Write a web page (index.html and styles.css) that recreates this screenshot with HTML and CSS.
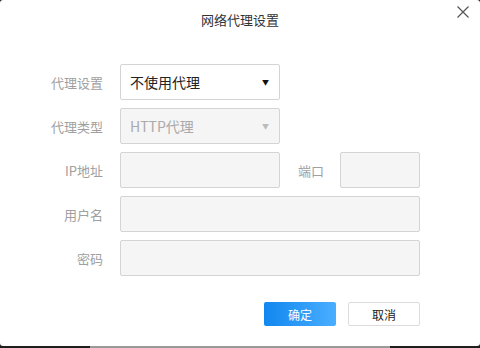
FILE: index.html
```html
<!DOCTYPE html>
<html lang="zh-CN">
  <head>
    <meta charset="UTF-8" />
    <title>网络代理设置</title>
    <link rel="stylesheet" href="styles.css">
  </head>
  <body>
    <div class="dialog">
      <div class="dialog-header">
        <h1>网络代理设置</h1>
        <button class="close-btn" aria-label="关闭">
          <svg width="12" height="12" viewBox="0 0 12 12">
            <path d="M0.5 0.5 L11.5 11.5 M11.5 0.5 L0.5 11.5" stroke="#555" stroke-width="1.2" fill="none" />
          </svg>
        </button>
      </div>

      <div class="form">
        <div class="form-row">
          <label class="form-label">代理设置</label>
          <div class="select">
            <span>不使用代理</span>
            <span class="arrow">▼</span>
          </div>
        </div>

        <div class="form-row">
          <label class="form-label">代理类型</label>
          <div class="select disabled">
            <span>HTTP代理</span>
            <span class="arrow">▼</span>
          </div>
        </div>

        <div class="form-row">
          <label class="form-label">IP地址</label>
          <input class="input input-ip" disabled />
          <label class="form-label port-label">端口</label>
          <input class="input input-port" disabled />
        </div>

        <div class="form-row">
          <label class="form-label">用户名</label>
          <input class="input input-wide" disabled />
        </div>

        <div class="form-row">
          <label class="form-label">密码</label>
          <input class="input input-wide" type="password" disabled />
        </div>
      </div>

      <div class="dialog-footer">
        <button class="btn btn-primary">确定</button>
        <button class="btn btn-default">取消</button>
      </div>
    </div>
    <div class="taskbar-strip"></div>
  </body>
</html>
```

FILE: styles.css
```css
/* Base */
body {
  margin: 0;
  background: #1e1e1e;
  font-family: "Noto Sans CJK SC", "Noto Sans", sans-serif;
  color: #333;
}

.dialog {
  height: 346px;
  background: #fff;
  border-radius: 3px;
  box-sizing: border-box;
  display: flex;
  flex-direction: column;
}

/* Header */
.dialog-header {
  position: relative;
  height: 64px;
}

.dialog-header h1 {
  margin: 0;
  padding-top: 10px;
  font-size: 13px;
  font-weight: normal;
  text-align: center;
  line-height: 20px;
  color: #333;
}

.close-btn {
  position: absolute;
  top: 6px;
  right: 11px;
  width: 12px;
  height: 12px;
  padding: 0;
  border: none;
  background: none;
  cursor: pointer;
}

/* Form */
.form {
  display: flex;
  flex-direction: column;
  gap: 8px;
}

.form-row {
  display: flex;
  align-items: center;
  height: 36px;
}

.form-label {
  width: 120px;
  padding-right: 17px;
  box-sizing: border-box;
  text-align: right;
  font-size: 13px;
  color: #a0a0a0;
}

.port-label {
  width: auto;
  padding: 0 16px 0 18px;
}

.select {
  width: 160px;
  height: 36px;
  box-sizing: border-box;
  border: 1px solid #d4d4d4;
  border-radius: 2px;
  background: #fff;
  display: flex;
  align-items: center;
  justify-content: space-between;
  padding: 0 10px 0 9px;
  font-size: 14px;
  color: #222;
}

.select .arrow {
  font-size: 7px;
  color: #111;
}

.select.disabled {
  background: #f5f5f5;
  color: #aaa;
}

.select.disabled .arrow {
  color: #bbb;
}

.input {
  height: 36px;
  box-sizing: border-box;
  border: 1px solid #d4d4d4;
  border-radius: 2px;
  background: #f5f5f5;
  margin: 0;
  padding: 0 8px;
}

.input-ip {
  width: 160px;
}

.input-port {
  width: 80px;
}

.input-wide {
  width: 300px;
}

/* Footer */
.dialog-footer {
  display: flex;
  justify-content: flex-end;
  gap: 12px;
  margin-top: 26px;
  padding-right: 60px;
}

.btn {
  width: 72px;
  height: 24px;
  border-radius: 2px;
  font-family: inherit;
  font-size: 12px;
  padding: 0;
  cursor: pointer;
}

.btn-primary {
  border: none;
  color: #fff;
  background: linear-gradient(to right, #1187ef, #4aaeff);
}

.btn-default {
  border: 1px solid #dcdcdc;
  background: #fff;
  color: #222;
}

.taskbar-strip {
  height: 2px;
  background: linear-gradient(to right, #1e1e1e 90px, #9a9a9a 90px, #9a9a9a 390px, #1e1e1e 390px);
}
```
